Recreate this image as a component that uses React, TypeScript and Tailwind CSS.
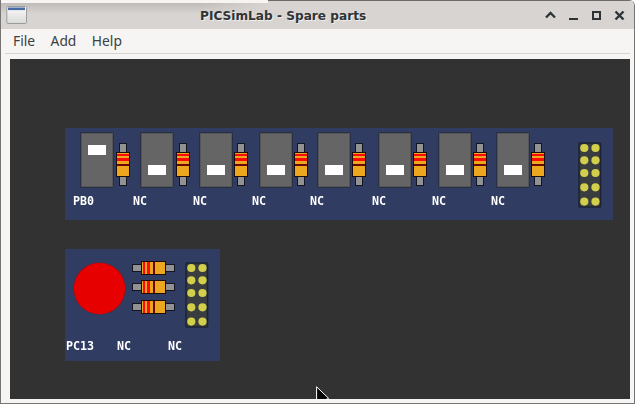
const SWITCHES = [
  { label: 'PB0', gap: 'gap-[2px]', shift: '-ml-2', on: true },
  { label: 'NC', gap: 'gap-[2px]', shift: '-ml-2', on: false },
  { label: 'NC', gap: 'gap-px', shift: '-ml-[7px]', on: false },
  { label: 'NC', gap: 'gap-px', shift: '-ml-2', on: false },
  { label: 'NC', gap: 'gap-px', shift: '-ml-2', on: false },
  { label: 'NC', gap: 'gap-px', shift: '-ml-[7px]', on: false },
  { label: 'NC', gap: 'gap-px', shift: '-ml-[7px]', on: false },
  { label: 'NC', gap: 'gap-px', shift: '-ml-[6px]', on: false },
];

function Resistor({ horizontal = false }: { horizontal?: boolean }) {
  return (
    <svg
      className="block shrink-0"
      width={horizontal ? 43 : 14}
      height={horizontal ? 14 : 43}
      viewBox={horizontal ? '0 0 43 14' : '0 0 14 43'}
    >
      <g transform={horizontal ? 'matrix(0 1 1 0 0 0)' : undefined}>
        <rect x="3.5" y="0.5" width="7" height="42" fill="#929292" stroke="#131522" />
        <rect x="0.5" y="9.5" width="13" height="24" fill="#eda71e" stroke="#1c0c0c" />
        <rect x="1" y="11" width="12" height="2" fill="#ff0808" />
        <rect x="1" y="15" width="12" height="3" fill="#ff0808" />
        <rect x="1" y="21" width="12" height="2" fill="#6a0508" />
      </g>
    </svg>
  );
}

function PinHeader() {
  return (
    <svg className="block shrink-0" width="24" height="66" viewBox="0 0 24 66">
      <rect x="1" y="1" width="21.6" height="64" rx="0.8" fill="#3a3d40" stroke="#1d2334" strokeWidth="1.5" />
      {[6, 18.3, 31, 45.3, 59.6].map((cy) => (
        <g key={cy} fill="#d2cf4d">
          <circle cx="6.3" cy={cy} r="4.1" />
          <circle cx="17.5" cy={cy} r="4.1" />
        </g>
      ))}
    </svg>
  );
}

function ToggleSwitch({ on }: { on: boolean }) {
  return (
    <div
      className={`-ml-px flex h-[56px] w-[34px] shrink-0 justify-center rounded-[1px] border border-[#282f45] bg-[#656565] shadow-[inset_0_0_0_1px_#555] ${on ? 'pt-[12px]' : 'pt-[32px]'}`}
    >
      <div className="h-[10px] w-[18px] bg-white" />
    </div>
  );
}

function TitleBar() {
  return (
    <header className="relative h-[29px] shrink-0 bg-[#d8d4d1]">
      <div className="absolute inset-x-0 top-0 h-px bg-[#706967]" />
      <div className="absolute top-0 left-0 h-[14px] w-[268px] bg-linear-to-b from-[#b9b5b3] to-[#d8d4d1] mask-r-from-75% mask-r-to-100%" />
      <div className="absolute top-0 left-0 h-[3px] w-[267px] bg-[#f6f5f4]" />
      <div className="relative grid h-[29px] grid-cols-[199px_1fr_auto] items-center pt-px pr-[7px]">
        <svg className="ml-[5px]" width="21" height="18" viewBox="0 0 21 18">
          <defs>
            <linearGradient id="pane" x1="0" y1="0" x2="0" y2="1">
              <stop offset="0" stopColor="#fafafa" />
              <stop offset="1" stopColor="#d9dbd7" />
            </linearGradient>
          </defs>
          <rect x="0.8" y="0.5" width="19.7" height="17" rx="1.2" fill="url(#pane)" stroke="#9c9d9a" />
          <rect x="2" y="1.5" width="17" height="2.6" fill="#466ba5" />
        </svg>
        <h1 className="pt-[2px] font-['DejaVu_Sans',sans-serif] text-[12.15px] leading-[16px] font-bold whitespace-nowrap text-[#2e3436] [text-shadow:1px_1px_0_#f0eeed]">
          PICSimLab - Spare parts
        </h1>
        <svg width="82" height="13" viewBox="0 0 82 13" fill="none" stroke="#2e3436">
          <path d="M1 8.5 5.5 4 10 8.5" strokeWidth="2.3" />
          <path d="M24 10h9" strokeWidth="2" />
          <path d="M48 3h7v7h-7z" strokeWidth="2" />
          <path d="M70.5 2.5l8 8M78.5 2.5l-8 8" strokeWidth="2.4" />
        </svg>
      </div>
    </header>
  );
}

function SwitchBoard() {
  return (
    <section className="flex h-[92px] w-[548px] bg-[#313c62] pt-1 pl-[16px]">
      <div className="grid w-[497px] shrink-0 grid-cols-[60px_59px_60px_58px_61px_60px_58px_1fr]">
        {SWITCHES.map((s, i) => (
          <div key={i}>
            <div className={`flex h-[56px] items-center pt-[9px] ${s.gap}`}>
              <div className="-mt-[9px]">
                <ToggleSwitch on={s.on} />
              </div>
              <Resistor />
            </div>
            <div
              className={`mt-[6px] scale-y-110 text-[11.67px] leading-[14px] font-bold text-white ${s.shift}`}
            >
              {s.label}
            </div>
          </div>
        ))}
      </div>
      <div className="mt-[10px]">
        <PinHeader />
      </div>
    </section>
  );
}

function LedBoard() {
  return (
    <section className="flex h-[112px] w-[155px] flex-col bg-[#313c62] pt-[12px]">
      <div className="flex h-[78px] shrink-0 items-start pl-[9px]">
        <div className="mt-[2px] size-[51px] rounded-full bg-[#e60000] shadow-[0_0_0_0.5px_#8c101c]" />
        <div className="ml-[7px] flex flex-col gap-[5px]">
          <Resistor horizontal />
          <Resistor horizontal />
          <div className="pt-px">
            <Resistor horizontal />
          </div>
        </div>
        <div className="mt-px ml-[10px]">
          <PinHeader />
        </div>
      </div>
      <div className="grid scale-y-110 grid-cols-[51px_51px_1fr] pl-px text-[11.67px] leading-[14px] font-bold text-white">
        <span>PC13</span>
        <span>NC</span>
        <span>NC</span>
      </div>
    </section>
  );
}

export default function App() {
  return (
    <div className="flex h-[404px] w-[635px] flex-col overflow-hidden rounded-tr-[6px] border-r border-b border-l border-[#777574] bg-[#f6f5f4]">
      <TitleBar />
      <nav className="mx-1 flex h-[25px] shrink-0 items-center gap-[15.5px] border-b border-[#d7d5d3] pt-px pl-[8px] font-['Noto_Sans',sans-serif] text-[13.8px] text-[#3b4042]">
        <span>File</span>
        <span>Add</span>
        <span>Help</span>
      </nav>
      <main className="relative mt-[5px] mr-1 ml-[9px] flex h-[340px] shrink-0 flex-col gap-[29px] overflow-hidden bg-[#323232] pt-[69px] pl-[55px] font-['DejaVu_Sans_Mono',monospace]">
        <SwitchBoard />
        <LedBoard />
        <svg className="absolute top-[327px] left-[306px]" width="14" height="18" viewBox="0 0 14 18">
          <path d="M.6.8v17l12-5.5z" fill="#050505" stroke="#fff" strokeWidth="1" />
        </svg>
      </main>
    </div>
  );
}
